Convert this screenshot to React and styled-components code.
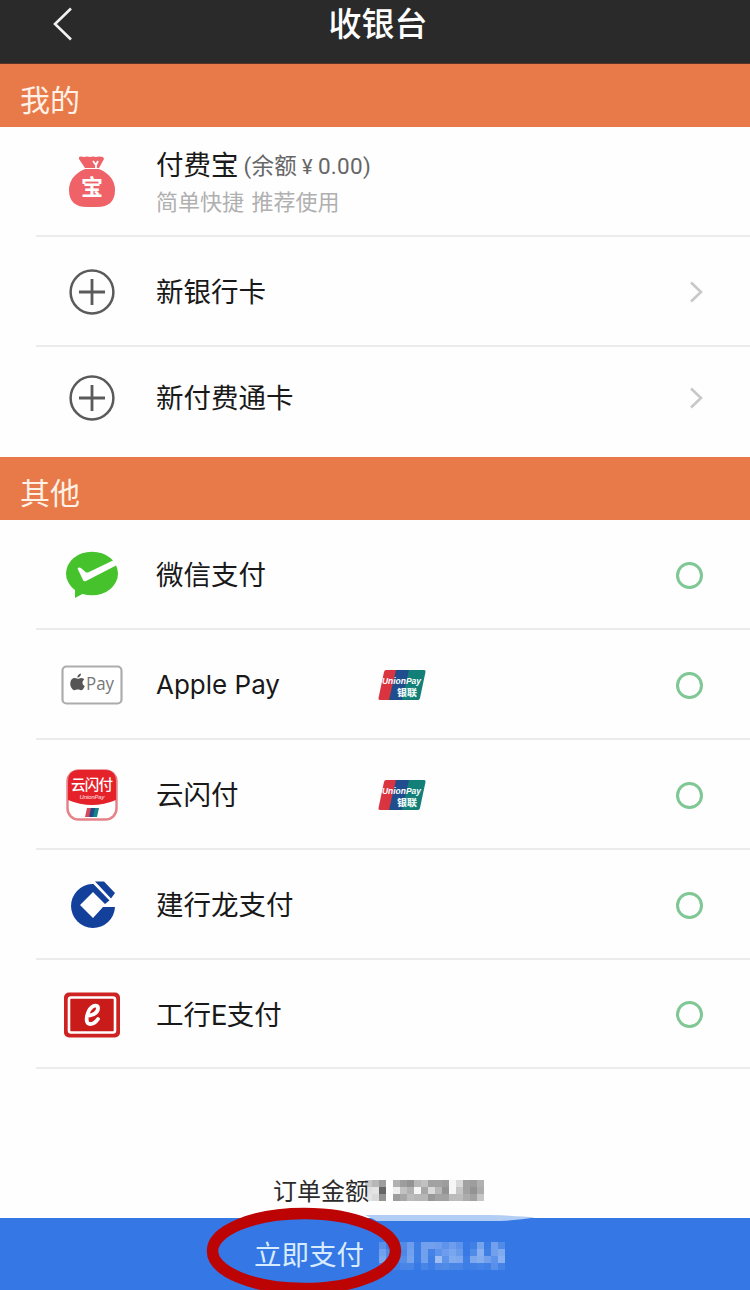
import styled, { createGlobalStyle } from "styled-components";

const GlobalStyle = createGlobalStyle`
    *{
        box-sizing: border-box;
    }
    body{
        margin: 0;
        background: #fefefe;
        font-family: Roboto, "Noto Sans CJK SC", sans-serif;
    }
`;

const orderMask = [
    [22, 28, 38, 0, 30, 38, 42, 28, 24, 36, 36, 38, 3, 14, 36, 38, 30],
    [12, 10, 60, 0, 6, 24, 30, 3, 34, 14, 28, 42, 3, 22, 36, 42, 32],
    [10, 14, 42, 0, 38, 34, 26, 28, 28, 40, 36, 36, 26, 26, 32, 36, 22],
];

const payMask = [
    [18, 4, 10, 14, 28, 4, 30, 30, 28, 20, 28, 20, 2, 6, 32, 3, 30, 14],
    [30, 14, 10, 12, 30, 4, 30, 8, 20, 28, 34, 26, 2, 14, 42, 6, 30, 38],
    [34, 12, 12, 16, 32, 4, 30, 6, 52, 20, 38, 36, 5, 36, 40, 30, 20, 42],
    [10, 6, 6, 10, 10, 2, 10, 4, 12, 14, 10, 10, 4, 6, 8, 6, 18, 8],
];

export default function App(){
    return(
        <Page>
            <GlobalStyle/>
            <Header>
                <BackArrow viewBox="0 0 20 34">
                    <path d="M18 1.5 2 17l16 15.5" fill="none" stroke="#f2f2f2" strokeWidth="2.6"/>
                </BackArrow>
                <Title>收银台</Title>
            </Header>
            <SectionTitle>我的</SectionTitle>
            <Row>
                <IconBox><MoneyBag/></IconBox>
                <WalletText>
                    <WalletName>付费宝<Balance>(余额<Yen>¥</Yen>0.00)</Balance></WalletName>
                    <Hint>简单快捷 推荐使用</Hint>
                </WalletText>
            </Row>
            <Row>
                <IconBox><PlusCircle/></IconBox>
                <Name>新银行卡</Name>
                <Chevron/>
            </Row>
            <Row $shift={11} $last>
                <IconBox><PlusCircle/></IconBox>
                <Name>新付费通卡</Name>
                <Chevron/>
            </Row>
            <SectionTitle>其他</SectionTitle>
            <Row>
                <IconBox><WechatIcon/></IconBox>
                <Name>微信支付</Name>
                <Radio/>
            </Row>
            <Row>
                <IconBox><ApplePayIcon/></IconBox>
                <Name $latin>Apple Pay</Name>
                <UnionPay/>
                <Radio/>
            </Row>
            <Row>
                <IconBox><QuickPassIcon/></IconBox>
                <Name>云闪付</Name>
                <UnionPay/>
                <Radio/>
            </Row>
            <Row>
                <IconBox><CcbIcon/></IconBox>
                <Name>建行龙支付</Name>
                <Radio/>
            </Row>
            <Row $height={109}>
                <IconBox><IcbcIcon/></IconBox>
                <Name>工行E支付</Name>
                <Radio/>
            </Row>
            <OrderBar>
                <OrderText>订单金额</OrderText>
                <Mosaic cells={orderMask} color="#000"/>
            </OrderBar>
            <PayButton>
                <PayText>立即支付</PayText>
                <Mosaic cells={payMask} color="#fff"/>
                <Smear viewBox="0 0 170 6">
                    <path d="M0 0h126q30 1 44 2.500q-20 3.500-44 3.500H12Z" fill="#b3cef5"/>
                </Smear>
                <Highlight viewBox="0 0 196 90">
                    <ellipse cx="98" cy="45" rx="91.500" ry="37.500" fill="none" stroke="#bd0404" strokeWidth="11.500"/>
                </Highlight>
            </PayButton>
        </Page>
    );
}

function Mosaic({cells, color}){
    const width = cells[0].length * 7;
    const height = cells.length * 7;
    return(
        <MosaicSvg width={width} height={height} viewBox={`0 0 ${width} ${height}`}>
            {cells.map((line, y) => line.map((value, x) => (
                <rect key={`${x}-${y}`} x={x * 7} y={y * 7} width="7" height="7" fill={color} opacity={value / 100}/>
            )))}
        </MosaicSvg>
    );
}

function MoneyBag(){
    return(
        <svg width="48" height="52" viewBox="0 0 48 52">
            <path d="M11 1q2-1 5 0q3-1 6 0q3-1 6 0q3-1 7 0l1 2-5 9H17L11 3Z" fill="#ee6268"/>
            <path d="M25 5l3 4 2-4M28 9v3" stroke="#fff" strokeWidth="1.8" fill="none"/>
            <path d="M17 13h14q16 7 16 21q0 17-18 17H19Q1 51 1 34q0-14 16-21Z" fill="#ee6268"/>
            <text x="24" y="39" textAnchor="middle" fontSize="22" fontWeight="700" fill="#fff" fontFamily="Noto Sans CJK SC">宝</text>
        </svg>
    );
}

function PlusCircle(){
    return(
        <svg width="46" height="46" viewBox="0 0 46 46" fill="none" stroke="#5a5a5a" strokeWidth="2.5">
            <circle cx="23" cy="23" r="21.4"/>
            <path d="M23 10v26M10 23h26" strokeWidth="2.8"/>
        </svg>
    );
}

function Chevron(){
    return(
        <ChevronSvg viewBox="0 0 14 22">
            <path d="M2 1.5 12 11 2 20.5" fill="none" stroke="#c8c8c8" strokeWidth="2.6"/>
        </ChevronSvg>
    );
}

function WechatIcon(){
    return(
        <svg width="54" height="48" viewBox="0 0 54 48">
            <ellipse cx="27" cy="22.5" rx="26" ry="21.8" fill="#46c32c"/>
            <path d="M10 36v11l11-6Z" fill="#46c32c"/>
            <path d="M12.500 17.500q1.500-2 4 0l4 3.500q1.500 1 3.500 0L48 9.500l5 4L21 30q-2 1-3-1Z" fill="#fff"/>
        </svg>
    );
}

function ApplePayIcon(){
    return(
        <svg width="62" height="40" viewBox="0 0 62 40">
            <rect x="1.5" y="1.5" width="59" height="37" rx="4" fill="#fff" stroke="#acacac" strokeWidth="2.2"/>
            <path d="M16.500 13.800c1.300 0 2.200-1 4-.900 1.200.1 2.200.6 2.800 1.500-2.700 1.600-2.300 5.300.5 6.500-.8 2.200-2.200 4.300-3.700 4.300-1.300 0-1.700-.7-3.300-.7s-2.100.7-3.300.7c-2.200 0-4.600-4.200-4.200-7.300.4-4.600 3.900-5.700 7.200-4.100ZM16.300 12.600c-.1-2 1.500-3.900 3.600-4.200.3 2.100-1.500 4.100-3.600 4.200Z" fill="#555"/>
            <text x="25" y="25" fontSize="19" textLength="28" lengthAdjust="spacingAndGlyphs" fill="#777" fontFamily="Open Sans">Pay</text>
        </svg>
    );
}

function QuickPassIcon(){
    return(
        <svg width="52" height="52" viewBox="0 0 52 52">
            <rect x="1.500" y="1.500" width="49" height="49" rx="11" fill="#fff" stroke="#e58388" strokeWidth="2.500"/>
            <path d="M2 31V13Q2 1 13 1h26q11 0 11 12v18Q26 41 2 31Z" fill="#e5212a"/>
            <text x="26" y="21" textAnchor="middle" fontSize="14.500" fontWeight="500" textLength="42" fill="#fff" fontFamily="Noto Sans CJK SC">云闪付</text>
            <text x="26" y="30" textAnchor="middle" fontSize="6" fontStyle="italic" fontWeight="700" textLength="25" fill="#f9b9bb" fontFamily="Liberation Sans">UnionPay</text>
            <path d="M21 39h5l-2 9h-5Z" fill="#d6495a"/>
            <path d="M25 39h5l-2 9h-5Z" fill="#234a86"/>
            <path d="M29 39h4l-2 9h-4Z" fill="#16858a"/>
        </svg>
    );
}

function CcbIcon(){
    return(
        <svg width="48" height="48" viewBox="0 0 48 48">
            <path d="M24 3A22 22 0 1 0 47 26H35L25 37 12 24 25 11l12 12 5-4L26 3Z" fill="#12409a"/>
            <path d="M27 .5h9L47 12l-4 5.500Z" fill="#12409a"/>
            <path d="M25 1 43 19.500" stroke="#fff" strokeWidth="2.200"/>
        </svg>
    );
}

function IcbcIcon(){
    return(
        <svg width="58" height="46" viewBox="0 0 58 46">
            <rect x="1" y="0.500" width="56" height="45" rx="5" fill="#cf2323"/>
            <rect x="6" y="5.500" width="46" height="35" rx="2" fill="#ca1b1b" stroke="#fff" strokeWidth="2.600"/>
            <path d="M24 24c7-1 11-4 11-8 0-3-4-3-6-1-5 4-8 17-2 17 3 0 6-2 8-5" fill="none" stroke="#fff" strokeWidth="3.800" strokeLinecap="round"/>
        </svg>
    );
}

function UnionPay(){
    return(
        <UnionPaySvg viewBox="0 0 50 32">
            <path d="M9 1h12l-7 30H3q-2 0-1.500-2L7 3q.5-2 2-2Z" fill="#d9343f"/>
            <path d="M19 1h15l-7 30H12Z" fill="#204d8d"/>
            <path d="M32 1h15q2 0 1.500 2L43 29q-.5 2-2 2H25Z" fill="#128078"/>
            <text x="5" y="14.500" fontSize="9" fontStyle="italic" fontWeight="700" textLength="39" lengthAdjust="spacingAndGlyphs" fill="#fff" fontFamily="Liberation Sans">UnionPay</text>
            <text x="20" y="27" fontSize="9" fontWeight="900" textLength="20" lengthAdjust="spacingAndGlyphs" fill="#e9f7f4" fontFamily="Noto Sans CJK SC">银联</text>
        </UnionPaySvg>
    );
}

const Page = styled.div`
    width: 750px;
    height: 1290px;
    display: flex;
    flex-direction: column;
    overflow: hidden;
    background: #fefefe;
`;

const Header = styled.header`
    height: 64px;
    flex-shrink: 0;
    display: grid;
    grid-template-columns: 100px 1fr 94px;
    padding-bottom: 18px;
    align-items: center;
    background: #2a2a2a;
    border-bottom: 1px solid #5a3526;
`;

const BackArrow = styled.svg`
    width: 20px;
    height: 34px;
    margin-left: 53px;
`;

const Title = styled.div`
    padding-top: 3px;
    color: #fff;
    font-size: 33px;
    font-weight: 500;
    line-height: 44px;
    text-align: center;
`;

const SectionTitle = styled.div`
    height: 63px;
    flex-shrink: 0;
    padding: 10px 20px 0;
    background: #e87a49;
    color: #fff1e6;
    font-size: 30px;
    line-height: 54px;
`;

const Row = styled.div`
    height: ${props => props.$height || 110}px;
    flex-shrink: 0;
    margin-left: 36px;
    padding: 2px 47px ${props => props.$shift || 0}px 20px;
    display: flex;
    align-items: center;
    border-bottom: ${props => props.$last?'none':'2px solid #ebebeb'};
`;

const IconBox = styled.div`
    width: 72px;
    flex-shrink: 0;
    display: flex;
    justify-content: center;
    margin-right: 28px;
    &>svg{
        display: block;
    }
`;

const Name = styled.div`
    width: 221px;
    padding-top: 2px;
    color: #191919;
    font-size: 27.5px;
    line-height: 40px;
    ${props => props.$latin && 'padding-top: 0; font-family: Inter, sans-serif; font-size: 26px;'}
`;

const WalletText = styled.div`
    display: flex;
    flex-direction: column;
    padding-top: 2px;
`;

const WalletName = styled.div`
    display: flex;
    align-items: center;
    color: #191919;
    font-size: 27.5px;
    line-height: 38px;
`;

const Balance = styled.span`
    margin-left: 5px;
    color: #666;
    font-size: 22.5px;
    letter-spacing: 0.3px;
`;

const Yen = styled.span`
    margin: 0 5px;
    font-size: 20px;
`;

const Hint = styled.div`
    color: #b0b0b0;
    font-size: 22px;
    line-height: 34px;
    word-spacing: 2px;
`;

const ChevronSvg = styled.svg`
    width: 14px;
    height: 22px;
    margin-left: auto;
`;

const Radio = styled.div`
    width: 27px;
    height: 27px;
    margin-left: auto;
    border: 3px solid #7fc795;
    border-radius: 50%;
`;

const UnionPaySvg = styled.svg`
    width: 50px;
    height: 32px;
    overflow: visible;
`;

const OrderBar = styled.div`
    flex: 1;
    display: flex;
    align-items: flex-end;
    padding: 0 0 8px 273px;
`;

const OrderText = styled.div`
    width: 92px;
    color: #2b2b2b;
    font-size: 24px;
    line-height: 36px;
    white-space: nowrap;
    &+svg{
        margin-bottom: 9px;
    }
`;

const PayButton = styled.div`
    position: relative;
    height: 72px;
    flex-shrink: 0;
    display: flex;
    align-items: center;
    padding: 3px 0 0 254px;
    background: #3578e5;
`;

const PayText = styled.div`
    width: 125px;
    color: #d8ecff;
    font-size: 27.5px;
    line-height: 40px;
`;

const MosaicSvg = styled.svg`
    display: block;
    shape-rendering: crispEdges;
`;

const Smear = styled.svg`
    position: absolute;
    left: 365px;
    top: -3px;
    width: 170px;
    height: 6px;
`;

const Highlight = styled.svg`
    position: absolute;
    left: 206px;
    top: -12px;
    width: 196px;
    height: 90px;
`;
